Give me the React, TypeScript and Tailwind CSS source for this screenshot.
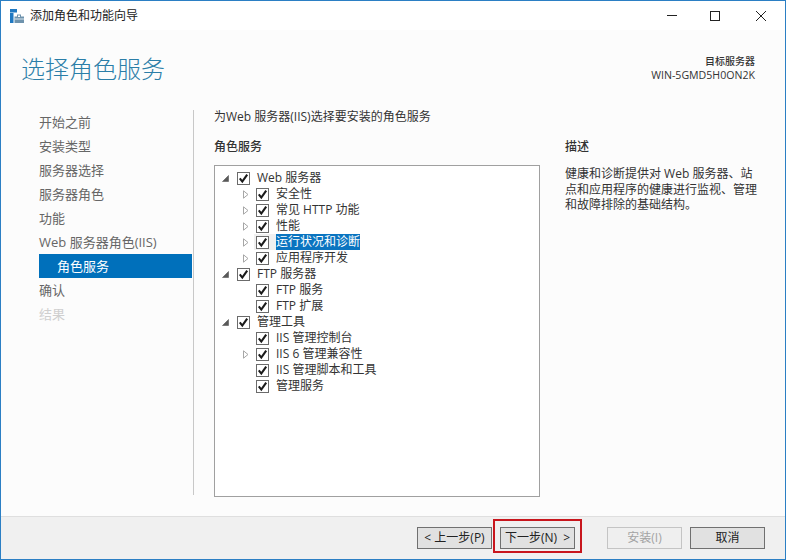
import React from "react";

const Arrow = ({ open }: { open?: boolean }) =>
  open ? (
    <svg width="7" height="7" viewBox="0 0 7 7" className="block">
      <path d="M6.5 0.5V6.5H0.5Z" fill="#595959" stroke="#595959" strokeWidth="0.6" />
    </svg>
  ) : (
    <svg width="6" height="9" viewBox="0 0 6 9" className="block">
      <path d="M0.5 0.8L5 4.5L0.5 8.2Z" fill="#fff" stroke="#a6a6a6" strokeWidth="1" />
    </svg>
  );

const Check = () => (
  <span className="flex h-[13px] w-[13px] shrink-0 items-center justify-center border border-[#6b6b6b] bg-white">
    <svg width="11" height="11" viewBox="0 0 11 11" className="block">
      <path d="M1.8 5.4L4.3 8.6L9.2 1.6" fill="none" stroke="#1a1a1a" strokeWidth="2.1" />
    </svg>
  </span>
);

type Row = { label: string; level: 0 | 1; arrow?: boolean; selected?: boolean };

const rows: Row[] = [
  { label: "Web 服务器", level: 0, arrow: true },
  { label: "安全性", level: 1, arrow: true },
  { label: "常见 HTTP 功能", level: 1, arrow: true },
  { label: "性能", level: 1, arrow: true },
  { label: "运行状况和诊断", level: 1, arrow: true, selected: true },
  { label: "应用程序开发", level: 1, arrow: true },
  { label: "FTP 服务器", level: 0, arrow: true },
  { label: "FTP 服务", level: 1 },
  { label: "FTP 扩展", level: 1 },
  { label: "管理工具", level: 0, arrow: true },
  { label: "IIS 管理控制台", level: 1 },
  { label: "IIS 6 管理兼容性", level: 1, arrow: true },
  { label: "IIS 管理脚本和工具", level: 1 },
  { label: "管理服务", level: 1 },
];

const nav = ["开始之前", "安装类型", "服务器选择", "服务器角色", "功能", "Web 服务器角色(IIS)"];

const Btn = ({ children, disabled, cls = "" }: { children: React.ReactNode; disabled?: boolean; cls?: string }) => (
  <button
    className={
      disabled
        ? `h-[22px] w-[75px] border border-[#c4c4c4] bg-[#efefef] text-[12px] leading-[20px] text-[#a3a3a3] ${cls}`
        : `h-[22px] w-[75px] border border-[#707070] bg-[#e1e1e1] text-[12px] leading-[20px] text-[#222] ${cls}`
    }
  >
    {children}
  </button>
);

export default function App() {
  return (
    <div
      className="flex h-[560px] w-[786px] flex-col overflow-hidden border border-[#2b7fc4] bg-white text-[12px] text-[#333]"
      style={{ fontFamily: '"Open Sans", "Noto Sans CJK SC", sans-serif' }}
    >
      <div className="flex h-[29px] shrink-0 items-center bg-white">
        <svg width="15" height="15" viewBox="0 0 15 15" className="ml-[9px] mt-[1px] block">
          <rect x="0" y="0" width="7" height="3.5" fill="#1f78c1" />
          <rect x="0" y="4" width="3.5" height="10" fill="#1f78c1" />
          <path d="M4.5 7.5H7V5.5H11V7.5H14V14H4.5Z" fill="#6f93ad" />
          <path d="M8 6.5H10V8H8Z" fill="#fff" />
          <path d="M4.5 10H14" stroke="#dbe6ee" strokeWidth="1" />
        </svg>
        <span className="ml-[5px] text-[12px] text-[#222]">添加角色和功能向导</span>
        <div className="ml-auto flex h-full pr-px">
          <div className="flex w-[46px] items-center justify-center pl-[6px]">
            <div className="h-px w-[10px] bg-[#222]" />
          </div>
          <div className="flex w-[46px] items-center justify-center">
            <div className="h-[10px] w-[10px] border border-[#222]" />
          </div>
          <div className="flex w-[46px] items-center justify-center">
            <svg width="10" height="10" viewBox="0 0 10 10" className="block">
              <path d="M0 0L10 10M10 0L0 10" stroke="#222" strokeWidth="1" />
            </svg>
          </div>
        </div>
      </div>

      <div className="flex min-h-0 flex-1 flex-col bg-[#fcfcfc]">
        <div className="flex h-[80px] shrink-0 justify-between pl-[20px] pr-[30px]">
          <h1 className="mt-[21px] text-[24px] font-light leading-[36px] text-[#2b7ea8]">选择角色服务</h1>
          <div className="mt-[24px] text-right text-[10px] leading-[14px] text-[#333]">
            <div className="font-medium">目标服务器</div>
            <div className="text-[10.6px] text-[#333]">WIN-5GMD5H0ON2K</div>
          </div>
        </div>

        <div className="flex min-h-0 flex-1 pl-[38px]">
          <div className="w-[153px] shrink-0 text-[13px]">
            {nav.map((n) => (
              <div key={n} className="h-[24px] leading-[24px] text-[#666]">
                {n}
              </div>
            ))}
            <div className="h-[24px] bg-[#0070bb] pl-[18px] leading-[24px] text-white">角色服务</div>
            <div className="h-[24px] leading-[24px] text-[#666]">确认</div>
            <div className="h-[24px] leading-[24px] text-[#cfcfcf]">结果</div>
          </div>

          <div className="ml-px h-[385px] w-px shrink-0 self-start bg-[#c8c8c8]" />

          <div className="ml-[20px] flex h-[386px] flex-col">
            <div className="-mt-px h-[16px] leading-[16px]">为Web 服务器(IIS)选择要安装的角色服务</div>
            <div className="mt-[6px] flex">
              <div className="w-[326px]">
                <div className="mb-[10px] mt-[8px] h-[16px] font-medium leading-[16px] text-[#333]">角色服务</div>
                <div className="h-[332px] w-[326px] border border-[#a0a0a0] bg-white pt-[4px]">
                  {rows.map((r) => (
                    <div key={r.label} className="flex h-[16px] items-center">
                      <div
                        className={`flex h-[16px] shrink-0 items-center justify-start ${r.level === 0 ? "w-[22px] pl-[7px]" : "w-[41px] pl-[28px]"}`}
                      >
                        {r.arrow && <Arrow open={r.level === 0} />}
                      </div>
                      {r.selected ? (
                        <span className="-ml-[2px] flex h-[16px] w-[22px] shrink-0 items-center bg-[#f0f0f0] pl-[2px]">
                          <Check />
                        </span>
                      ) : (
                        <Check />
                      )}
                      <span
                        className={
                          r.selected
                            ? "h-[16px] bg-[#0a74c0] leading-[16px] text-white"
                            : "ml-[7px] h-[16px] leading-[16px] text-[#333]"
                        }
                      >
                        {r.label}
                      </span>
                    </div>
                  ))}
                </div>
              </div>
              <div className="ml-[25px] w-[194px]">
                <div className="mt-[8px] h-[16px] font-medium leading-[16px] text-[#333]">描述</div>
                <p className="mt-[11px] text-[12px] leading-[15.5px]">
                  健康和诊断提供对 Web 服务器、站点和应用程序的健康进行监视、管理和故障排除的基础结构。
                </p>
              </div>
            </div>
          </div>
        </div>

        <div className="flex h-[43px] shrink-0 items-center border-t border-[#dfdfdf] bg-[#f0f0f0] pl-[416px]">
          <Btn>&lt; 上一步(P)</Btn>
          <div className="relative ml-[8px] flex">
            <Btn>下一步(N)&nbsp; &gt;</Btn>
            <div className="absolute left-[-7px] top-[-8px] h-[34px] w-[89px] border-2 border-[#c8161d]" />
          </div>
          <Btn disabled cls="ml-[32px]">安装(I)</Btn>
          <Btn cls="ml-[8px]">取消</Btn>
        </div>
      </div>
    </div>
  );
}
